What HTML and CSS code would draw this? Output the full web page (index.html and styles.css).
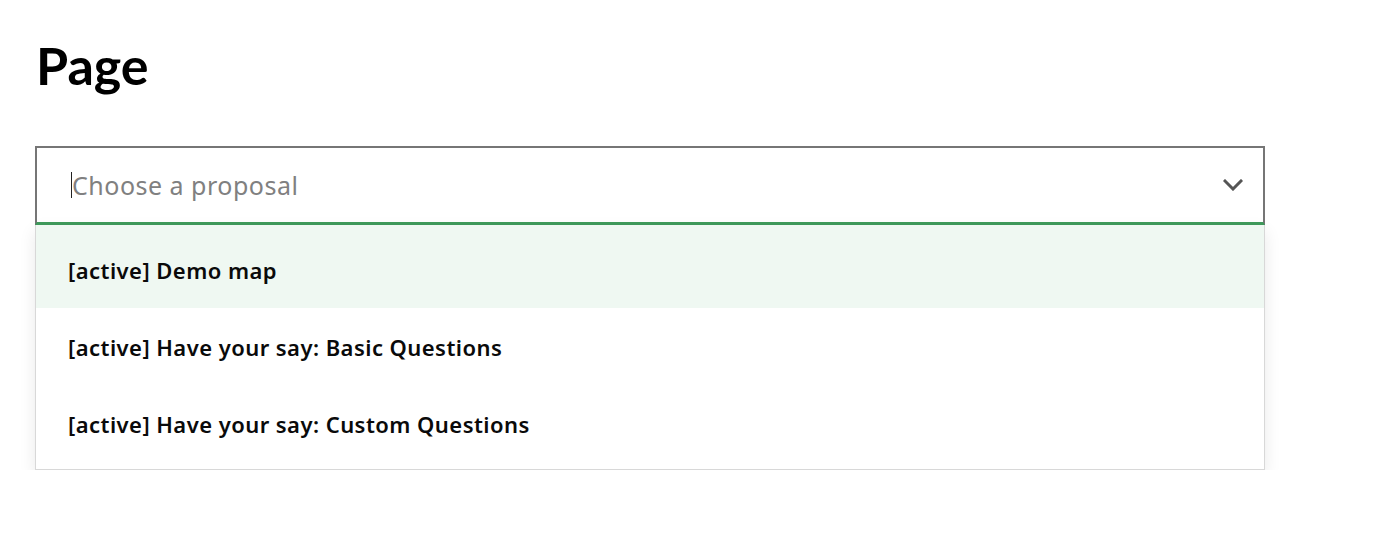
FILE: index.html
```html
<!DOCTYPE html>
<html lang="en">
<head>
<meta charset="utf-8">
<title>Page</title>
<link rel="stylesheet" href="styles.css">
</head>
<body>
<main class="page">
  <h1 class="title">Page</h1>
  <div class="combo">
    <div class="control">
      <span class="caret"></span>
      <span class="placeholder">Choose a proposal</span>
      <svg class="chevron" width="20" height="12" viewBox="0 0 20 12" aria-hidden="true">
        <path d="M2 2 L10 10 L18 2" fill="none" stroke="#555" stroke-width="3" stroke-linecap="square"/>
      </svg>
    </div>
    <ul class="menu">
      <li class="option is-active">[active] Demo map</li>
      <li class="option">[active] Have your say: Basic Questions</li>
      <li class="option">[active] Have your say: Custom Questions</li>
    </ul>
  </div>
</main>
</body>
</html>
```
FILE: styles.css
```css
* { box-sizing: border-box; }
html, body { margin: 0; padding: 0; background: #fff; }
body { font-family: "Noto Sans", "Open Sans", "Liberation Sans", sans-serif; color: #0a0a0a; }
.page { padding: 30px 0 0 35px; width: 1265px; }
.title {
  margin: 0 0 0 1px;
  font-family: Lato, "Noto Sans", sans-serif;
  font-size: 52px;
  font-weight: 700;
  line-height: 70px;
  color: #000;
}
.combo { margin-top: 46px; width: 1230px; }
.control {
  height: 79px;
  border: 2px solid #767676;
  border-bottom: 3px solid #3f9b5c;
  display: flex;
  align-items: center;
  padding: 0 20px 0 34px;
}
.caret { width: 1px; height: 26px; background: #222; }
.placeholder { flex: 1; font-size: 25px; letter-spacing: 0.5px; color: #808080; }
.chevron { display: block; }
.menu {
  list-style: none;
  margin: 0;
  padding: 6px 0 7px;
  border: 1px solid #d8d8d8;
  border-top: none;
  box-shadow: 0 6px 16px rgba(0,0,0,0.09);
}
.option {
  height: 77px;
  display: flex;
  align-items: center;
  padding-left: 32px;
  font-size: 22px;
  letter-spacing: 0.45px;
  font-weight: 600;
  color: #0a0a0a;
}
.option.is-active { background: #eff8f2; margin-top: -6px; height: 83px; padding-top: 6px; }
```
